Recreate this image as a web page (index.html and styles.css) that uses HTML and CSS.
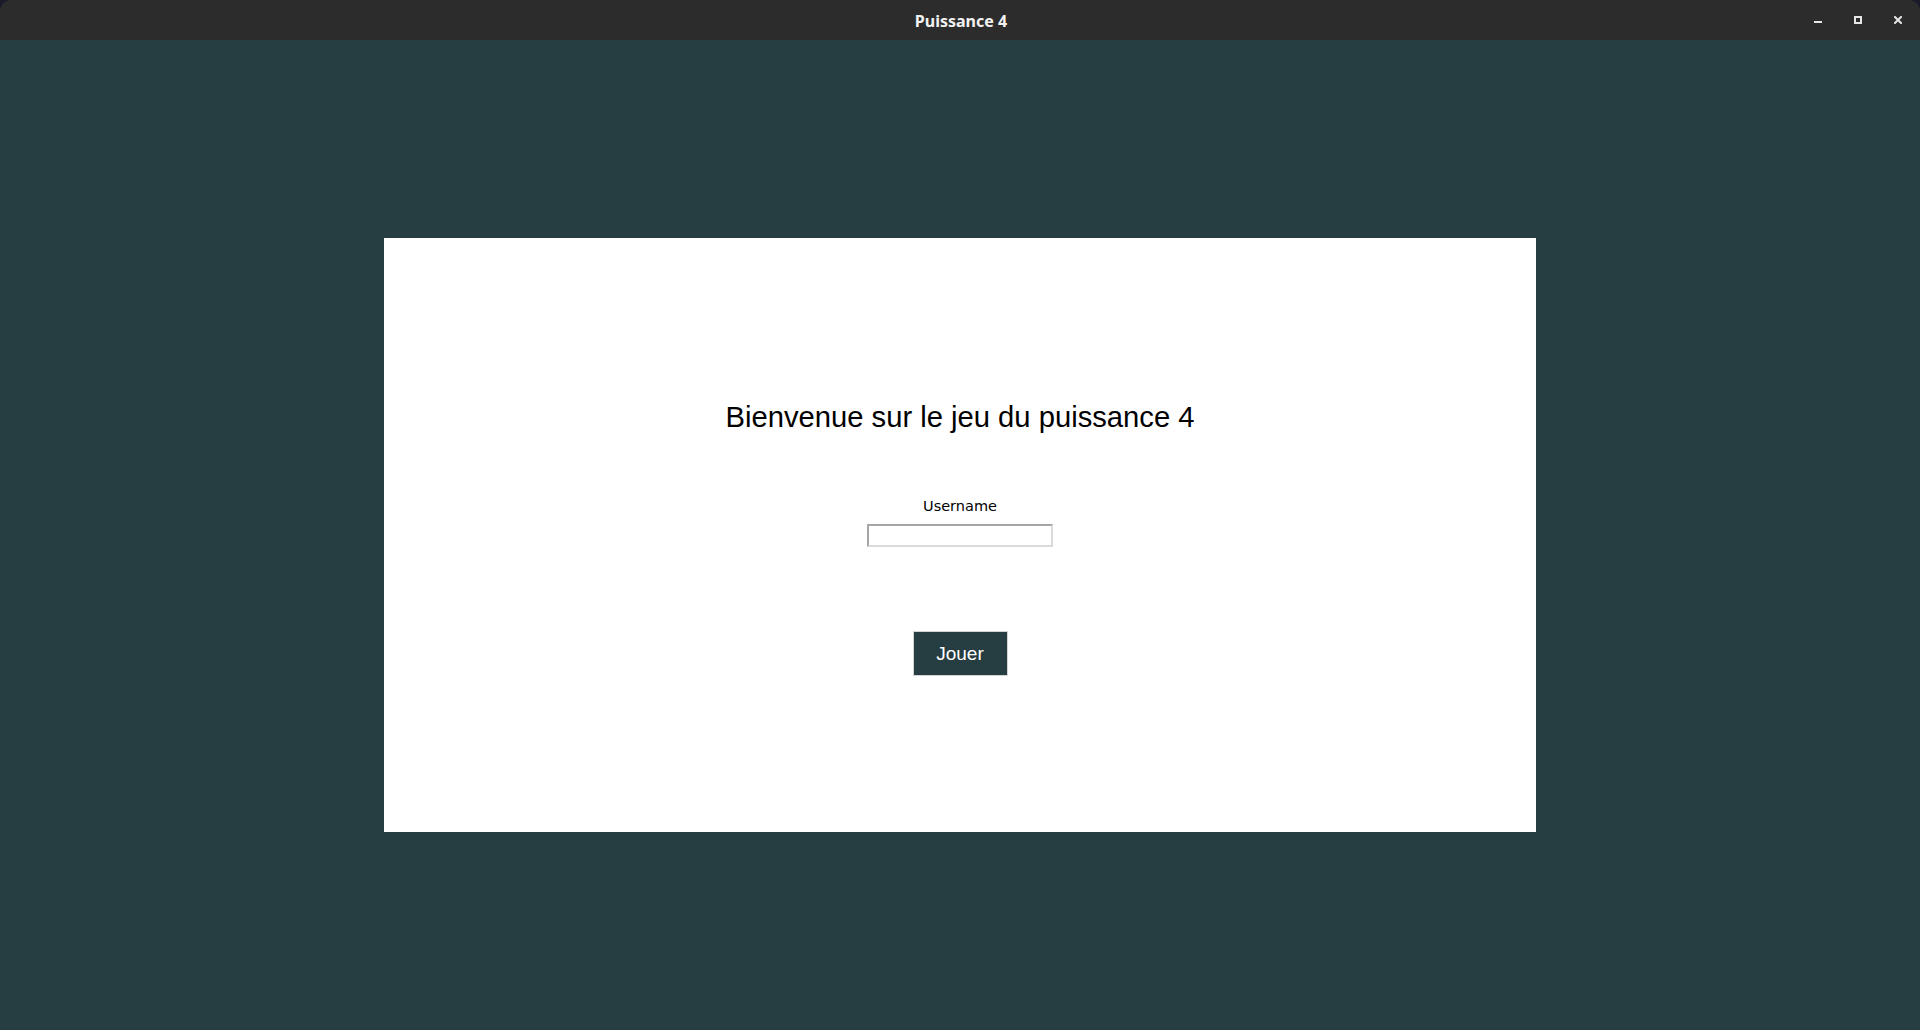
FILE: index.html
```html
<!DOCTYPE html>
<html lang="fr">
<head>
<meta charset="utf-8">
<title>Puissance 4</title>
<link rel="stylesheet" href="styles.css">
</head>
<body>
<div class="window">
  <header class="titlebar">
    <div class="title">Puissance 4</div>
    <div class="controls">
      <span class="ctrl">
        <svg width="8" height="8" viewBox="0 0 8 8"><rect x="0" y="5" width="8" height="2" fill="#e6e6e6"/></svg>
      </span>
      <span class="ctrl">
        <svg width="8" height="8" viewBox="0 0 8 8"><rect x="1" y="1" width="6" height="6" fill="none" stroke="#e6e6e6" stroke-width="2"/></svg>
      </span>
      <span class="ctrl">
        <svg width="8" height="8" viewBox="0 0 8 8"><path d="M1 1L7 7M7 1L1 7" stroke="#e6e6e6" stroke-width="2" stroke-linecap="square"/></svg>
      </span>
    </div>
  </header>
  <main class="content">
    <section class="card">
      <h1 class="heading">Bienvenue sur le jeu du puissance 4</h1>
      <label class="label" for="username">Username</label>
      <input class="entry" id="username" type="text">
      <button class="play" type="button">Jouer</button>
    </section>
  </main>
</div>
</body>
</html>
```
FILE: styles.css
```css
html, body {
  margin: 0;
  padding: 0;
  width: 1920px;
  height: 1030px;
  background: #1a1a28;
  overflow: hidden;
}
.window {
  width: 1920px;
  height: 1030px;
  display: flex;
  flex-direction: column;
  border-radius: 12px 12px 0 0;
  overflow: hidden;
  background: #263d42;
}
.titlebar {
  height: 40px;
  flex: 0 0 40px;
  background: #2c2c2c;
  position: relative;
  display: flex;
  align-items: center;
  justify-content: center;
}
.title {
  font-family: "Noto Sans", sans-serif;
  font-weight: 700;
  font-size: 16px;
  color: #f2f2f2;
  margin-left: 2px;
  margin-top: 1px;
}
.controls {
  position: absolute;
  right: 18px;
  top: 16px;
  display: flex;
  gap: 32px;
}
.ctrl {
  width: 8px;
  height: 8px;
  display: block;
}
.ctrl svg { display: block; }
.content {
  flex: 1;
  display: flex;
  align-items: center;
  justify-content: center;
}
.card {
  width: 1152px;
  height: 594px;
  box-sizing: border-box;
  background: #ffffff;
  display: flex;
  flex-direction: column;
  align-items: center;
  padding-top: 162px;
}
.heading {
  margin: 0;
  font-family: "Liberation Sans", Arial, sans-serif;
  font-weight: 400;
  font-size: 29.2px;
  line-height: 34px;
  color: #000;
}
.label {
  margin-top: 64px;
  font-family: "DejaVu Sans", sans-serif;
  font-size: 14.5px;
  line-height: 17px;
  color: #000;
}
.entry {
  margin: 9px 0 0 0;
  width: 186px;
  height: 23px;
  box-sizing: border-box;
  border: 2px solid;
  border-color: #a6a6a6 #dadada #dadada #a6a6a6;
  background: #fff;
  padding: 0;
  outline: none;
}
.play {
  margin-top: 84px;
  width: 95px;
  height: 45px;
  box-sizing: border-box;
  background: #263d42;
  border: 1px solid #d4d4d4;
  color: #fff;
  font-family: "Liberation Sans", Arial, sans-serif;
  font-size: 19px;
  padding: 0;
}
```
